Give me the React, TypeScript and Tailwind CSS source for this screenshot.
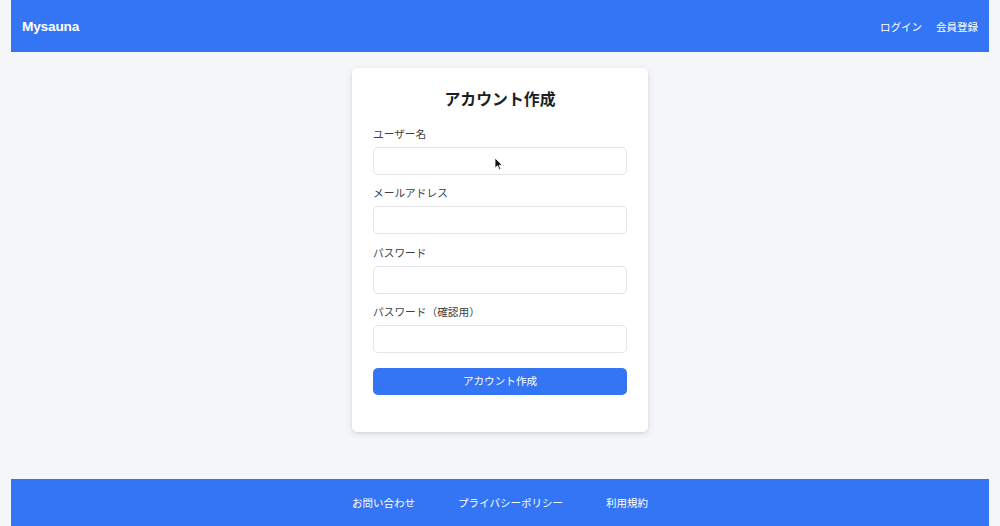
import React from "react";

const jp = "font-['Liberation_Sans','Noto_Sans_CJK_JP',sans-serif]";

function Field({ label, type = "text" }: { label: string; type?: string }) {
  return (
    <div className="mb-[10.35px]">
      <label className="block text-[10.7px] leading-[16px] text-[#3b3f46] mb-[5px]">{label}</label>
      <input
        type={type}
        className="block w-full h-[28px] rounded-[5px] border border-[#e3e5ea] bg-white outline-none"
      />
    </div>
  );
}

export default function App() {
  return (
    <div className={`${jp} min-h-[526px] h-[526px] bg-[#f5f6f9] px-[11px] flex flex-col overflow-hidden`}>
      <header className="h-[52px] bg-[#3375f4] flex items-center justify-between px-[11px] shrink-0">
        <div className="text-white font-bold text-[13.7px] leading-[18px] pt-[2px] font-['Liberation_Sans',sans-serif] tracking-[-0.2px]">Mysauna</div>
        <nav className="flex items-center gap-[14px] text-[10.5px] leading-[16px] pt-[1px] text-white">
          <span>ログイン</span>
          <span>会員登録</span>
        </nav>
      </header>
      <main className="flex-1 flex justify-center pt-[16px]">
        <div className="relative w-[296px] h-[364px] bg-white rounded-[5px] shadow-[0_2px_6px_rgba(0,0,0,0.1),0_1px_3px_rgba(0,0,0,0.06)] px-[21px] pt-[21px]">
          <h1 className="text-center text-[15.9px] leading-[21px] font-bold text-[#1c1f24] mb-[16px]">アカウント作成</h1>
          <Field label="ユーザー名" />
          <Field label="メールアドレス" type="email" />
          <Field label="パスワード" type="password" />
          <Field label="パスワード（確認用）" type="password" />
          <button className="mt-[5px] w-full h-[27px] rounded-[5px] bg-[#3375f4] text-white text-[10.6px]">
            アカウント作成
          </button>
          <svg
            className="absolute left-[142px] top-[89px]"
            width="10"
            height="14"
            viewBox="0 0 10 14"
          >
            <path d="M1 1 L1 11 L3.5 8.8 L5.3 12.6 L6.8 11.9 L5.1 8.3 L8.3 8.3 Z" fill="#111" stroke="#fff" strokeWidth="0.8" />
          </svg>
        </div>
      </main>
      <footer className="h-[47px] bg-[#3375f4] flex justify-center gap-[43px] pt-[16px] text-[10.5px] leading-[16px] text-white shrink-0">
        <span>お問い合わせ</span>
        <span>プライバシーポリシー</span>
        <span>利用規約</span>
      </footer>
    </div>
  );
}
